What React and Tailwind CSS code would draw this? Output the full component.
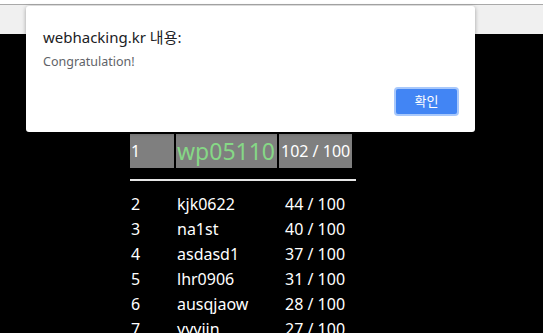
const ROWS = [
  { rank: 2, id: 'kjk0622', score: '44 / 100' },
  { rank: 3, id: 'na1st', score: '40 / 100' },
  { rank: 4, id: 'asdasd1', score: '37 / 100' },
  { rank: 5, id: 'lhr0906', score: '31 / 100' },
  { rank: 6, id: 'ausqjaow', score: '28 / 100' },
  { rank: 7, id: 'yyyjin', score: '27 / 100' },
]

const font = { fontFamily: '"Noto Sans", "Noto Sans CJK KR", sans-serif' }

export default function App() {
  return (
    <div className="relative h-[333px] w-[543px] overflow-hidden bg-black" style={font}>
      {/* browser strip */}
      <div className="h-[4px] bg-white" />
      <div className="h-[30px] border-t border-[#a9a9a9] bg-[#f0f0f0]" />

      {/* ranking */}
      <div className="ml-[130px] mt-[100px] w-[226px] text-white">
        <div className="flex gap-[2px]">
          <div className="flex h-[34px] w-[44px] items-center bg-[#7f7f7f] pl-[1px] text-[16px]">1</div>
          <div className="flex h-[34px] w-[101px] items-center bg-[#7f7f7f] pl-[1px] text-[23px] text-[#86d886]">
            wp05110
          </div>
          <div className="flex h-[34px] w-[73px] items-center bg-[#7f7f7f] pl-[2px] text-[16px]">102 / 100</div>
        </div>
        <div className="mt-[11px] h-[2px] w-[226px] bg-[#e6e6e6]" />
        <div className="mt-[10px]">
          {ROWS.map((r) => (
            <div key={r.rank} className="flex h-[25px] items-center text-[16px]">
              <span className="w-[47px] pl-[1px]">{r.rank}</span>
              <span className="w-[108px]">{r.id}</span>
              <span>{r.score}</span>
            </div>
          ))}
        </div>
      </div>

      {/* alert dialog */}
      <div className="absolute left-[26px] top-[6px] h-[126px] w-[449px] rounded-[3px] bg-white shadow-[0_1px_4px_rgba(0,0,0,0.35)]">
        <div className="pl-[17px] pt-[21px] text-[15px] leading-[20px] text-[#202124]">webhacking.kr 내용:</div>
        <div className="pl-[17px] pt-[6px] text-[12.5px] leading-[18px] text-[#5f6368]">Congratulation!</div>
        <div className="absolute left-[368px] top-[81px] flex h-[29px] w-[65px] items-center justify-center rounded-[4px] border-2 border-[#a8c8fb] bg-[#4285f4] text-[13px] text-white">
          확인
        </div>
      </div>
    </div>
  )
}
